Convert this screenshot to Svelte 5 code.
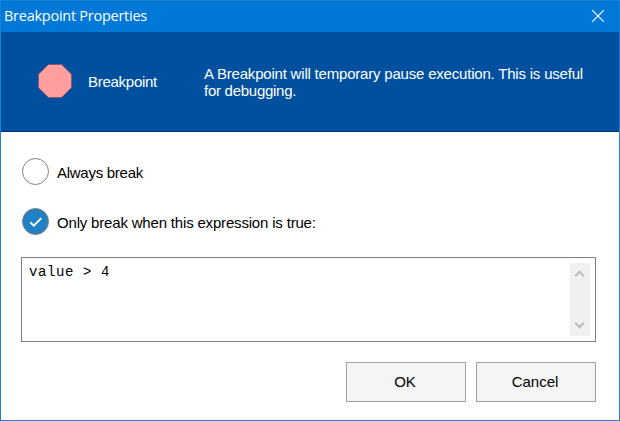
<script>
  let mode = $state('expression');
  let expression = $state('value > 4');
</script>

<div class="dialog">
  <div class="titlebar">
    <span class="title">Breakpoint Properties</span>
    <svg class="close" width="14" height="14" viewBox="0 0 14 14" aria-label="Close">
      <path d="M1.3 .3 12.7 11.7M12.7 .3 1.3 11.7" stroke="#fff" stroke-width="1.2" fill="none" />
    </svg>
  </div>

  <header>
    <svg class="stop" width="34" height="34" viewBox="0 0 34 34">
      <path d="M10.3.5H23.7L33.5 10.3V23.7L23.7 33.5H10.3L.5 23.7V10.3Z" fill="#ff9e9e" stroke="#91566c" />
    </svg>
    <span class="name">Breakpoint</span>
    <p><span class="line1">A Breakpoint will temporary pause execution. This is useful</span><br /><span class="line2">for debugging.</span></p>
  </header>

  <main>
    <div class="option" role="radio" tabindex="-1" aria-checked={mode === 'always'}>
      <svg width="27" height="27" viewBox="0 0 27 27">
        <circle cx="13.5" cy="13.5" r="13" fill="#fff" stroke="#7f7f7f" />
      </svg>
      <span class="always">Always break</span>
    </div>
    <div class="option second" role="radio" tabindex="-1" aria-checked={mode === 'expression'}>
      <svg width="27" height="27" viewBox="0 0 27 27">
        <circle cx="13.5" cy="13.5" r="13" fill="#2080c4" stroke="#7f7f7f" />
        <path d="M8.3 14.3 11.8 17.7 19.3 10.2" fill="none" stroke="#fff" stroke-width="1.9" />
      </svg>
      <span class="only">Only break when this expression is true:</span>
    </div>

    <div class="editor">
      <code>{expression}</code>
      <div class="scroll">
        <svg width="20" height="73" viewBox="0 0 20 73">
          <path d="M5.2 13.2 9.5 8.8 13.8 13.2M5.2 59.8 9.5 64.2 13.8 59.8" fill="none" stroke="#bfbfbf" stroke-width="2.2" />
        </svg>
      </div>
    </div>

    <div class="actions">
      <button type="button">OK</button>
      <button type="button">Cancel</button>
    </div>
  </main>
</div>

<style>
  .dialog {
    box-sizing: border-box;
    width: 620px;
    height: 421px;
    border: 1px solid #1a80d4;
    background: #fff;
    color: #000;
    font: 15px/17px "Liberation Sans", Arial, sans-serif;
    white-space: nowrap;
    overflow: hidden;
  }
  .titlebar {
    height: 31px;
    background: #0078d7;
    color: #fff;
    display: flex;
    align-items: center;
    justify-content: space-between;
    padding: 0 14px 0 3px;
    box-sizing: border-box;
  }
  .title {
    font: 14.5px/20px "Open Sans", "Noto Sans", sans-serif;
    letter-spacing: -0.26px;
    margin-top: -1px;
  }
  .close { display: block; }
  header {
    box-sizing: border-box;
    height: 100px;
    background: #00509f;
    border-bottom: 1px solid #003070;
    color: #fff;
    display: flex;
    align-items: flex-start;
    padding: 32px 0 0 37px;
  }
  .stop { display: block; flex: none; }
  .name { margin: 9px 0 0 16px; width: 116px; letter-spacing: -0.27px; }
  p { margin: 1px 0 0; }
  .line1 { letter-spacing: -0.2px; }
  .line2 { letter-spacing: -0.27px; }
  main { padding: 26px 23px 0 20px; }
  .option {
    display: flex;
    align-items: center;
    height: 27px;
    padding-left: 1px;
  }
  .option span { margin: 2px 0 0 8px; }
  .option .always { letter-spacing: -0.27px; }
  .option .only { letter-spacing: -0.18px; }
  .option svg { display: block; }
  .second { margin-top: 23px; }
  .editor {
    box-sizing: border-box;
    height: 85px;
    margin-top: 22px;
    border: 1px solid #7f7f7f;
    display: flex;
    justify-content: space-between;
    padding: 5px 5px 0 7px;
  }
  code {
    font: 14px/19px "Liberation Mono", "Courier New", monospace;
    letter-spacing: 0.6px;
    white-space: pre;
  }
  .scroll { width: 20px; height: 73px; background: #f0f0f0; }
  .scroll svg { display: block; }
  .actions {
    display: flex;
    justify-content: flex-end;
    gap: 10px;
    margin-top: 20px;
  }
  button {
    box-sizing: border-box;
    width: 120px;
    height: 40px;
    padding: 0 2px 2px 0;
    border: 1px solid #a0a0a0;
    border-radius: 0;
    background: #f5f5f5;
    color: #000;
    font: inherit;
  }
</style>
